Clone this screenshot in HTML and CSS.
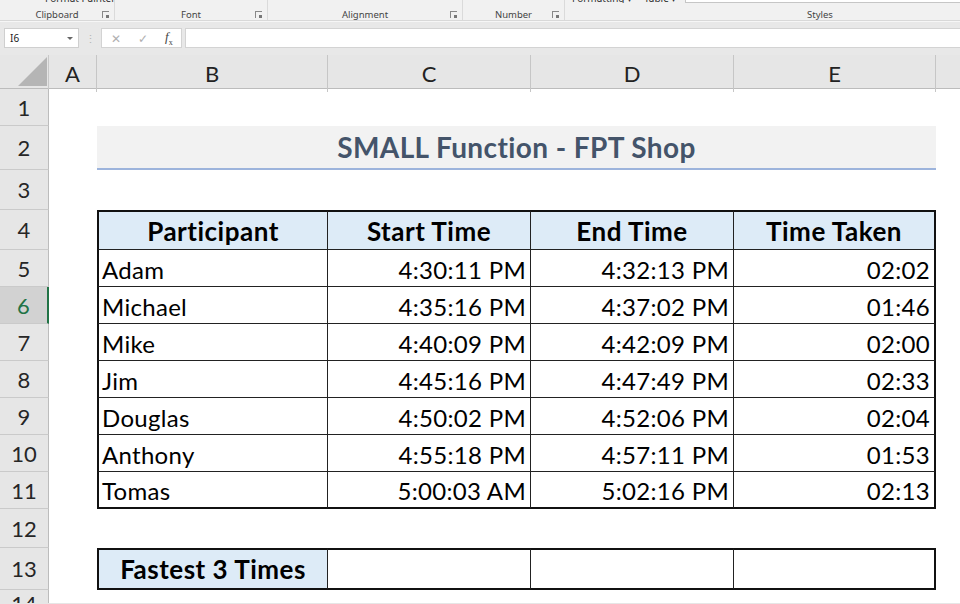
FILE: index.html
```html
<!DOCTYPE html>
<html>
<head>
  <meta charset="UTF-8">
  <title>SMALL Function - FPT Shop</title>
  <link rel="stylesheet" href="styles.css">
</head>
<body>
  <div class="ribbon">
    <div class="group g-clip">
      <div class="peek"><span class="brush"></span><span>Format Painter</span></div>
      <div class="glabel"><span></span><span>Clipboard</span><span class="launch"></span></div>
    </div>
    <div class="group g-font">
      <div class="peek"></div>
      <div class="glabel"><span></span><span>Font</span><span class="launch"></span></div>
    </div>
    <div class="group g-align">
      <div class="peek"></div>
      <div class="glabel"><span></span><span>Alignment</span><span class="launch"></span></div>
    </div>
    <div class="group g-num">
      <div class="peek"></div>
      <div class="glabel"><span></span><span>Number</span><span class="launch"></span></div>
    </div>
    <div class="group g-styles">
      <div class="peek"><span class="drop">Formatting ▾</span><span class="drop">Table ▾</span><span class="gallery"></span></div>
      <div class="glabel"><span></span><span>Styles</span><span></span></div>
    </div>
  </div>

  <div class="fbar">
    <div class="namebox">
      <span>I6</span>
      <span class="arrow"></span>
    </div>
    <div class="grip">⋮</div>
    <div class="fbtns">
      <span class="fx-x">✕</span>
      <span class="fx-ok">✓</span>
      <span class="fx-f"><i>f</i><sub>x</sub></span>
    </div>
    <div class="finput"></div>
  </div>

  <div class="sheet">
    <div class="row colhead">
      <div class="corner">
        <svg viewBox="0 0 49 34" width="49" height="34"><path d="M47 2 L47 31 L18 31 Z" fill="#b5b5b5"/></svg>
      </div>
      <div class="ch">A</div>
      <div class="ch">B</div>
      <div class="ch">C</div>
      <div class="ch">D</div>
      <div class="ch">E</div>
      <div class="ch last"></div>
    </div>

    <div class="row r37"><div class="rh">1</div></div>

    <div class="row r44">
      <div class="rh">2</div>
      <div></div>
      <div class="title">SMALL Function - FPT Shop</div>
    </div>

    <div class="row r40"><div class="rh">3</div></div>

    <div class="row r40 tbl first">
      <div class="rh">4</div>
      <div></div>
      <div class="c head">Participant</div>
      <div class="c head">Start Time</div>
      <div class="c head">End Time</div>
      <div class="c head">Time Taken</div>
    </div>
    <div class="row r37 tbl">
      <div class="rh">5</div><div></div>
      <div class="c name">Adam</div>
      <div class="c num">4:30:11 PM</div>
      <div class="c num">4:32:13 PM</div>
      <div class="c num">02:02</div>
    </div>
    <div class="row r37 tbl">
      <div class="rh sel">6</div><div></div>
      <div class="c name">Michael</div>
      <div class="c num">4:35:16 PM</div>
      <div class="c num">4:37:02 PM</div>
      <div class="c num">01:46</div>
    </div>
    <div class="row r37 tbl">
      <div class="rh">7</div><div></div>
      <div class="c name">Mike</div>
      <div class="c num">4:40:09 PM</div>
      <div class="c num">4:42:09 PM</div>
      <div class="c num">02:00</div>
    </div>
    <div class="row r37 tbl">
      <div class="rh">8</div><div></div>
      <div class="c name">Jim</div>
      <div class="c num">4:45:16 PM</div>
      <div class="c num">4:47:49 PM</div>
      <div class="c num">02:33</div>
    </div>
    <div class="row r37 tbl">
      <div class="rh">9</div><div></div>
      <div class="c name">Douglas</div>
      <div class="c num">4:50:02 PM</div>
      <div class="c num">4:52:06 PM</div>
      <div class="c num">02:04</div>
    </div>
    <div class="row r37 tbl">
      <div class="rh">10</div><div></div>
      <div class="c name">Anthony</div>
      <div class="c num">4:55:18 PM</div>
      <div class="c num">4:57:11 PM</div>
      <div class="c num">01:53</div>
    </div>
    <div class="row r37 tbl last">
      <div class="rh">11</div><div></div>
      <div class="c name">Tomas</div>
      <div class="c num">5:00:03 AM</div>
      <div class="c num">5:02:16 PM</div>
      <div class="c num">02:13</div>
    </div>

    <div class="row r39"><div class="rh">12</div></div>

    <div class="row r42 tbl first last">
      <div class="rh">13</div><div></div>
      <div class="c head">Fastest 3 Times</div>
      <div class="c"></div>
      <div class="c"></div>
      <div class="c"></div>
    </div>

    <div class="row r-rest"><div class="rh">14</div></div>
  </div>
</body>
</html>
```

FILE: styles.css
```css
* {
  margin: 0;
  padding: 0;
  box-sizing: border-box;
}

body {
  width: 960px;
  height: 604px;
  overflow: hidden;
  background: #e6e6e6;
  font-family: Lato, 'Noto Sans', sans-serif;
  color: #000;
}

/* ribbon (cut at the top) */
.ribbon {
  display: flex;
  height: 21px;
  background: #f1f1f1;
  border-bottom: 1px solid #d8d8d8;
  overflow: hidden;
  font-family: 'Noto Sans', 'Open Sans', sans-serif;
  font-size: 9.5px;
  color: #444;
}

.group {
  display: flex;
  flex-direction: column;
  flex-shrink: 0;
  border-right: 1px solid #dadada;
}

.g-clip { width: 115px; }
.g-font { width: 153px; }
.g-align { width: 195px; }
.g-num { width: 102px; }
.g-styles { width: 510px; border-right: none; }

.peek {
  height: 3px;
  flex-shrink: 0;
  font-size: 10px;
  line-height: 10px;
  color: #333;
  white-space: nowrap;
  display: flex;
  align-items: flex-end;
  overflow: hidden;
}

.g-clip .peek {
  padding-left: 38px;
  gap: 7px;
}

.brush {
  width: 5px;
  height: 3px;
  background: #e8a33c;
  border-radius: 1px;
}

.g-styles .peek {
  padding-left: 7px;
  gap: 12px;
}

.gallery {
  width: 400px;
  height: 3px;
  background: #fff;
  border: 1px solid #c6c6c6;
  border-top: none;
  margin-left: -3px;
}

.glabel {
  flex: 1;
  display: grid;
  grid-template-columns: 1fr auto 1fr;
  align-items: end;
  padding: 0 5px 0;
  line-height: 11px;
}

.launch {
  justify-self: end;
  align-self: end;
  margin-bottom: 2px;
  width: 7px;
  height: 7px;
  border-left: 1px solid #888;
  border-top: 1px solid #888;
  position: relative;
}

.launch::after {
  content: "";
  position: absolute;
  right: 0;
  bottom: 0;
  width: 3px;
  height: 3px;
  background: #777;
}

/* formula bar */
.fbar {
  display: flex;
  align-items: center;
  height: 34px;
  padding: 5px 0 6px 4px;
  background: #e8e8e8;
  border-top: 1px solid #f6f6f6;
  font-family: 'Noto Sans', sans-serif;
}

.namebox {
  width: 75px;
  height: 20px;
  background: #fff;
  border: 1px solid #cfcfcf;
  display: flex;
  align-items: center;
  justify-content: space-between;
  padding: 0 5px 0 5px;
  font-size: 10px;
  color: #222;
}

.arrow {
  width: 0;
  height: 0;
  border-left: 3px solid transparent;
  border-right: 3px solid transparent;
  border-top: 3px solid #666;
}

.grip {
  width: 22px;
  text-align: center;
  color: #b5b5b5;
  font-size: 11px;
}

.fbtns {
  width: 81px;
  height: 20px;
  background: #fff;
  border: 1px solid #d3d3d3;
  display: flex;
  align-items: center;
  padding-left: 9px;
  gap: 17px;
  font-size: 12px;
  color: #b0b0b0;
}

.fx-f {
  color: #444;
  font-family: 'Liberation Serif', serif;
  font-size: 13px;
}

.fx-f sub {
  font-size: 8px;
}

.finput {
  flex: 1;
  height: 20px;
  margin-left: 3px;
  background: #fff;
  border: 1px solid #d3d3d3;
  border-right: none;
}

/* sheet */
.sheet {
  background: #fff;
  height: 548px;
  overflow: hidden;
}

.row {
  display: grid;
  grid-template-columns: 49px 48px 231px 203px 203px 202px 1fr;
  height: 37px;
}

.r37 { height: 37px; }
.r39 { height: 39px; }
.r40 { height: 40px; }
.r42 { height: 42px; }
.r44 { height: 44px; }
.r-rest { height: 20px; }

.colhead {
  height: 34px;
  background: #e6e6e6;
  border-bottom: 1px solid #bcbcbc;
}

.corner {
  border-right: 1px solid #c8c8c8;
}

.ch {
  display: flex;
  align-items: center;
  justify-content: center;
  font-size: 22px;
  color: #222;
  border-right: 1px solid #c6c6c6;
}

.ch.last {
  border-right: none;
}

.rh {
  display: flex;
  align-items: center;
  justify-content: center;
  background: #e6e6e6;
  border-right: 1px solid #bcbcbc;
  border-bottom: 1px solid #cacaca;
  font-size: 22px;
  color: #262626;
}

.rh.sel {
  background: #d2d2d2;
  color: #217346;
  border-right: 2px solid #217346;
}

.title {
  grid-column: 3 / span 4;
  display: flex;
  align-items: center;
  justify-content: center;
  background: #f2f2f2;
  border-bottom: 2px solid #9db4dc;
  font-weight: 700;
  font-size: 28px;
  letter-spacing: 0.4px;
  color: #44546a;
}

.c {
  display: flex;
  align-items: center;
  font-size: 24px;
  letter-spacing: 0.3px;
  padding-top: 2px;
  border-right: 1px solid #222;
  border-bottom: 1px solid #222;
  white-space: nowrap;
}

.tbl .c:nth-child(3) {
  border-left: 2px solid #111;
}

.tbl .c:last-child {
  border-right: 2px solid #111;
}

.tbl.first .c {
  border-top: 2px solid #111;
}

.tbl.last .c {
  border-bottom: 2px solid #111;
}

.c.head {
  justify-content: center;
  background: #ddebf7;
  font-weight: 700;
  font-size: 26px;
  letter-spacing: 0.5px;
  padding-top: 0;
}

.c.name {
  padding-left: 3px;
}

.c.num {
  justify-content: flex-end;
  padding-right: 4px;
}
```
